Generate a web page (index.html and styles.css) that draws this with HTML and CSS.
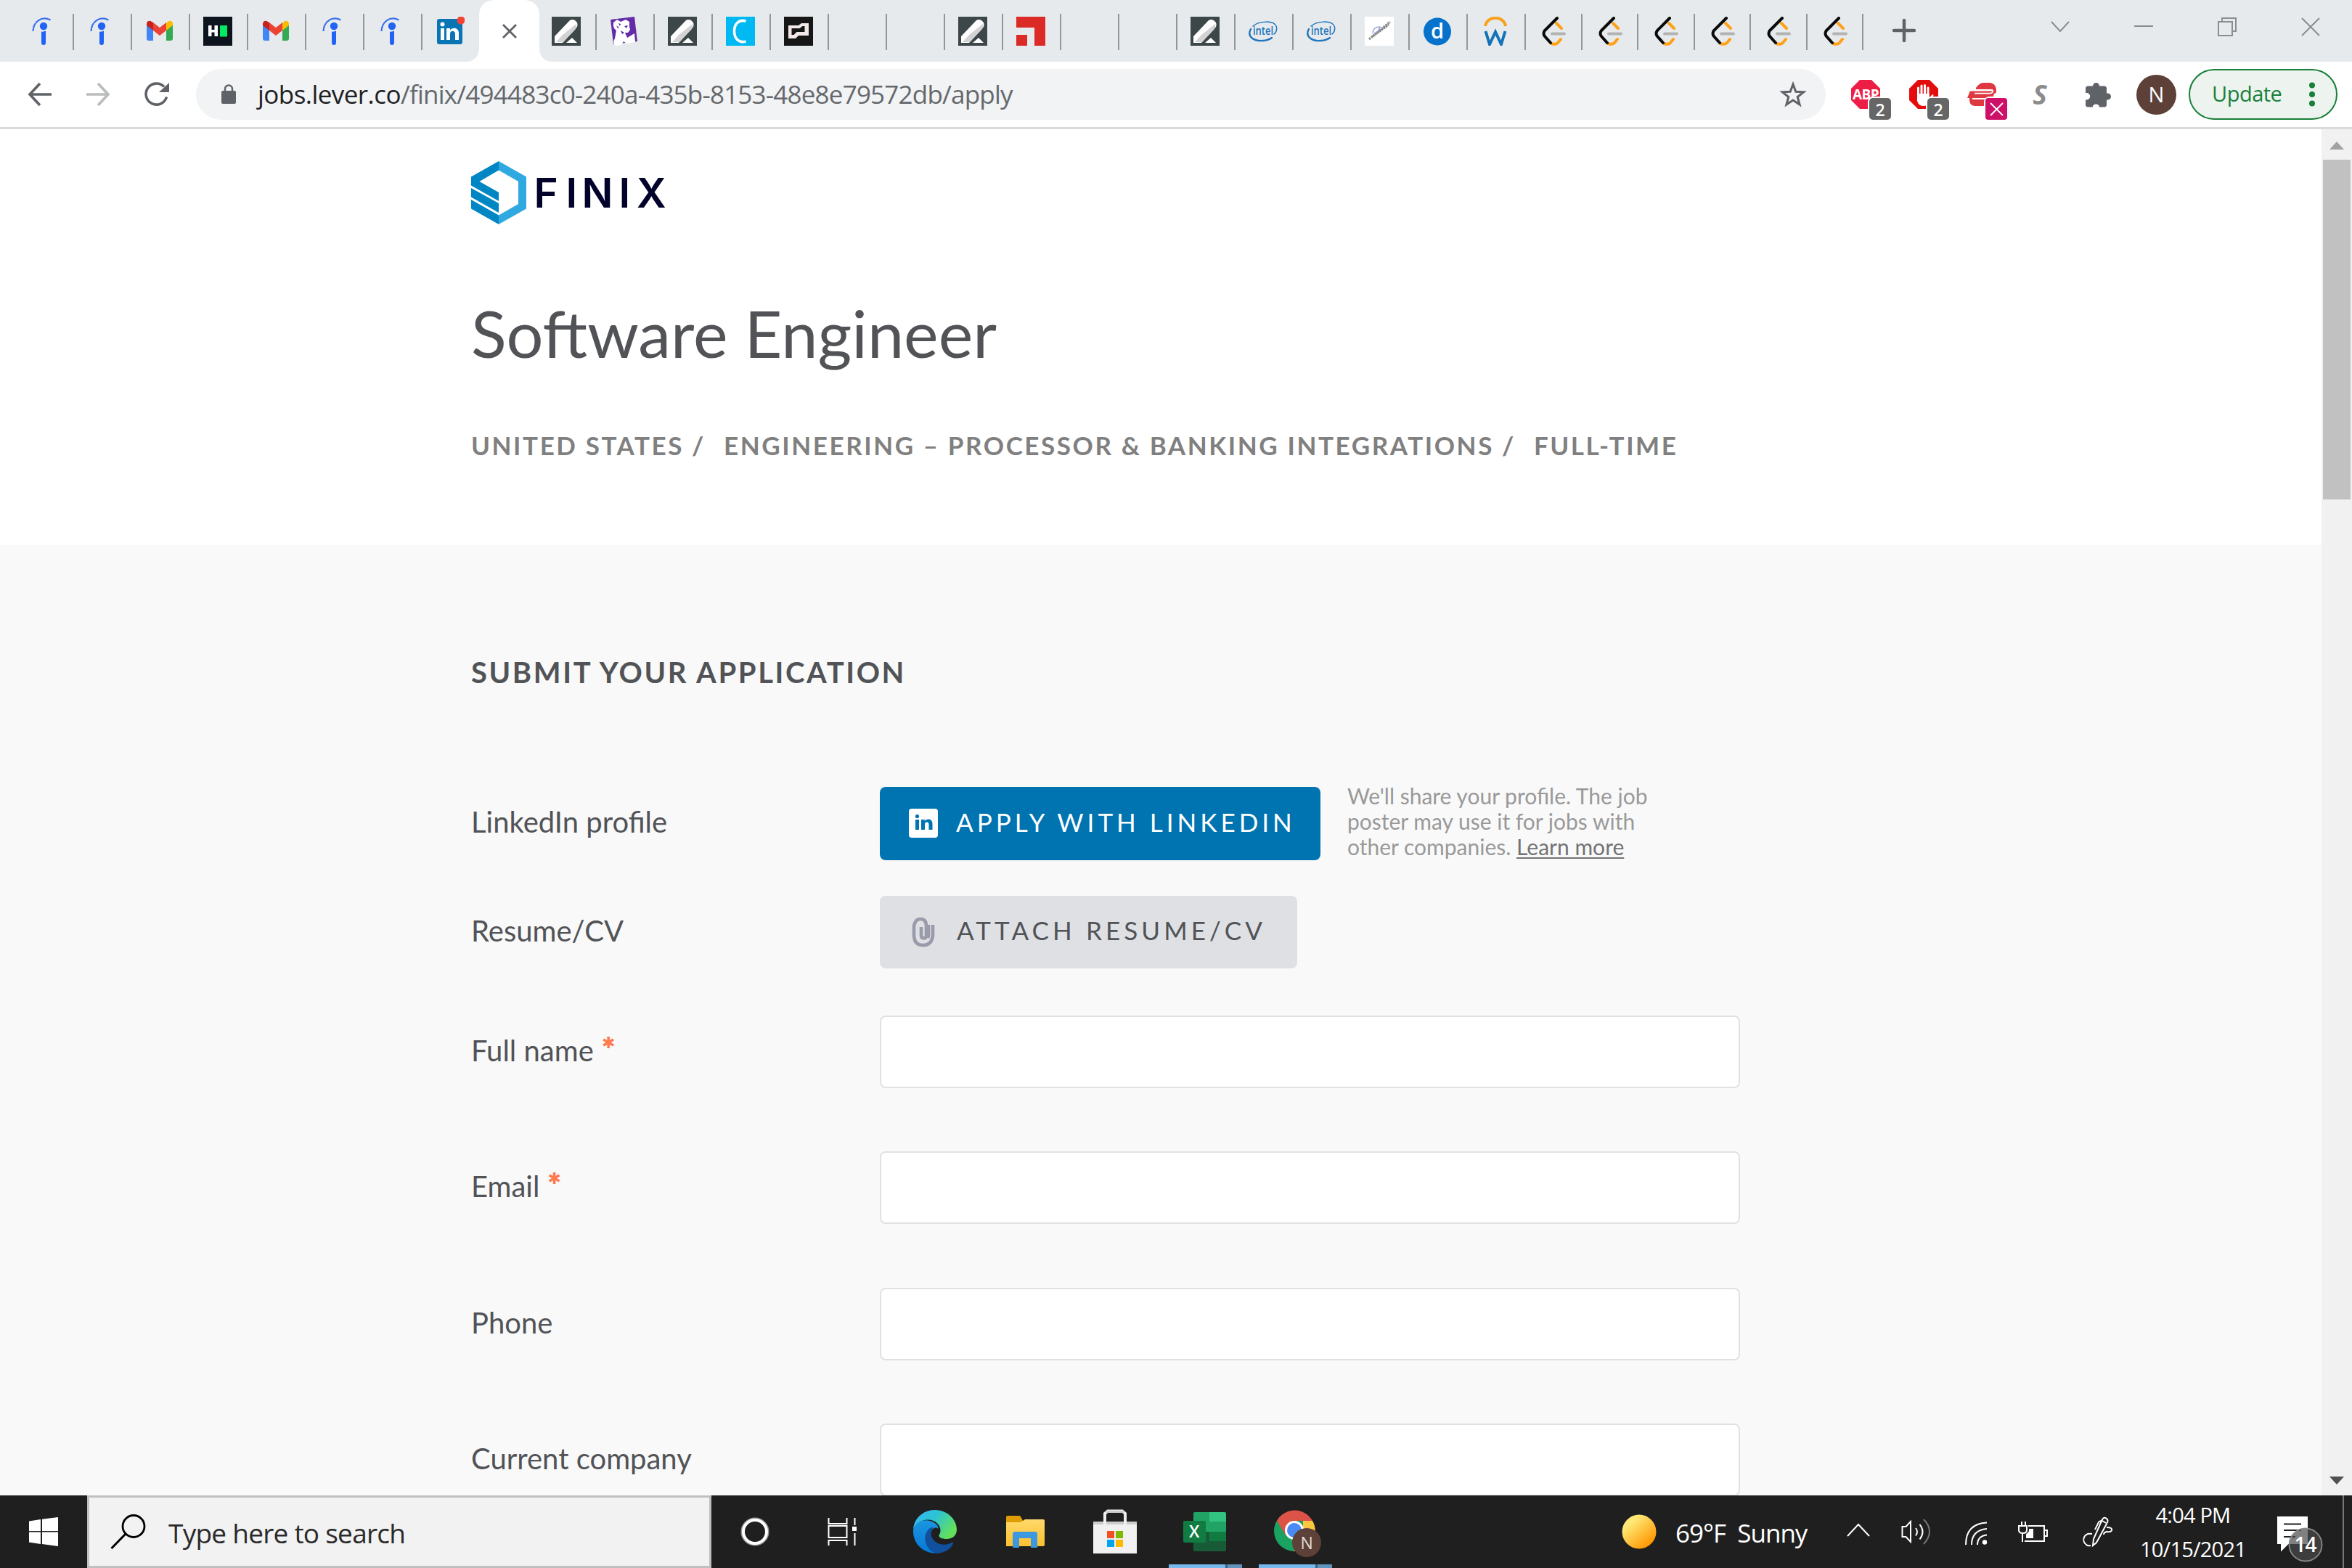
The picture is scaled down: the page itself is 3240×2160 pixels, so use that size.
FILE: index.html
```html
<!DOCTYPE html>
<html lang="en">
<head>
<meta charset="utf-8">
<title>Finix - Software Engineer</title>
<link rel="stylesheet" href="styles.css">
</head>
<body>
<svg width="0" height="0" class="defs">
  <defs>
    <linearGradient id="sun" x1="0.1" y1="0.1" x2="0.8" y2="0.9"><stop offset=".2" stop-color="#ffe873"/><stop offset="1" stop-color="#ff9500"/></linearGradient>
    <linearGradient id="edge-top" x1="0" y1="0" x2="1" y2=".5"><stop offset="0" stop-color="#35b5f5"/><stop offset=".5" stop-color="#2cc3d5"/><stop offset="1" stop-color="#62e05c"/></linearGradient>
    <linearGradient id="edge-mid" x1="0" y1="0" x2="0" y2="1"><stop offset="0" stop-color="#1b96de"/><stop offset="1" stop-color="#0578d8"/></linearGradient>
    <linearGradient id="folder" x1="0" y1="0" x2="0" y2="1"><stop offset="0" stop-color="#ffd96b"/><stop offset="1" stop-color="#fcbf2e"/></linearGradient>
    <symbol id="indeed" viewBox="0 0 40 40"><path d="M5.500 20C6 7 17 -1.500 29.500 4.500" fill="none" stroke="#3b70f0" stroke-width="2.200"/><circle cx="20" cy="13" r="5.200" fill="#2164f3"/><path d="M17 20.500q3 .5 6-1V36a3 3 0 0 1-6 0z" fill="#2164f3"/></symbol>
    <symbol id="gmail" viewBox="0 0 40 40"><path d="M2 11v19q0 3 3 3h6V17z" fill="#4285f4"/><path d="M29 17v16h6q3 0 3-3V11z" fill="#34a853"/><path d="M29 9v10l9-7v-2c0-4-4-5.500-7-3z" fill="#fbbc04"/><path d="M11 19V8l9 7 9-7v11l-9 7z" fill="#ea4335"/><path d="M2 10v2l9 7V8L9 7C6 4.500 2 6 2 10z" fill="#c5221f"/></symbol>
    <symbol id="hackerrank" viewBox="0 0 40 40"><path d="M0 0h40v40H0z" fill="#0e141e"/><path d="M7 12h4.500v6h4v-6H20v15h-4.500v-5.500h-4V27H7z" fill="#fff"/><path d="M23 12h10v15.500H23z" fill="#00ea64"/></symbol>
    <symbol id="linkedin" viewBox="0 0 40 40"><rect x="2" y="3" width="35" height="35" rx="3" fill="#0a75b5"/><g fill="#fff"><path d="M7 16h5v16H7zM15 16h5v2.500c3-4.500 12-4 12 4V32h-5v-8.500c0-5-7-5-7 0V32h-5z"/><circle cx="9.500" cy="10.500" r="3"/></g><circle cx="35" cy="5" r="5.500" fill="#f44336"/></symbol>
    <symbol id="slab" viewBox="0 0 40 40"><path d="M0 0h40v40H0z" fill="#3d474a"/><path d="M4 27L25 5q3-2 7 0l3 3q1 2 0 6L15 36H4z" fill="#fff"/><path d="M15 25L34 10q1 3-1 7L16 35H6z" fill="#d3d3d3"/><path d="M28 29l7 7H20z" fill="#fff"/></symbol>
    <symbol id="dog" viewBox="0 0 40 40"><path d="M1 4L34 0l4 34L5 38z" fill="#632ca6"/><path d="M5 8l5-4 5 3 7-3 5 3 0 7 1 4-3 4-4 0 3 7 10-6 1 12-12 2-4-3-3 5-8 1q-5-4-1-10l2-11q-5-3-4-11z" fill="#fff"/><path d="M12 9l3 1-1 3zM20 13l5-1-2 4zM15 19l5 3-3 2zM9 12l2 4 2-1z" fill="#632ca6"/></symbol>
    <symbol id="cfav" viewBox="0 0 40 40"><path d="M0 0h40v40H0z" fill="#00b9f2"/><path d="M27.500 6C17 3 11.500 11 11.500 20S17 37 27.500 34" fill="none" stroke="#fff" stroke-width="3.600"/></symbol>
    <symbol id="karat" viewBox="0 0 40 40"><path d="M0 0h40v40H0z" fill="#161616"/><path fill-rule="evenodd" d="M6 12h14l4-3h10v17H20l-4 4H6zM10.500 16v9h3l4-4h11v-8h-3l-4 3z" fill="#f3e8e8"/></symbol>
    <symbol id="redcorner" viewBox="0 0 40 40"><path d="M0 0h40v40H25V15H0zM0 25h15v15H0z" fill="#dc2b27"/></symbol>
    <symbol id="intel" viewBox="0 0 40 40"><g fill="none" stroke="#2075bb" stroke-linecap="round"><path d="M6 13C14 6 35 4 38.500 14q1 6-3.500 10" stroke-width="1.500"/><path d="M3 17C-3 28 8 34 20 33q7-.5 12-4" stroke-width="2.300"/></g><text x="6" y="24.500" font-size="17" textLength="28" lengthAdjust="spacingAndGlyphs" class="glyph-text intel-text">intel</text></symbol>
    <symbol id="quill" viewBox="0 0 40 40"><path d="M0 0h40v40H0z" fill="#fff"/><path d="M6 31L35 7M11 27L33 11" stroke="#888" stroke-width="3.200" stroke-dasharray="2.500 1.200"/><path d="M11 23q0-9 10-9-2 7-8 9" fill="none" stroke="#9ba8dc" stroke-width="1.500"/></symbol>
    <symbol id="dfav" viewBox="0 0 40 40"><circle cx="20" cy="20.500" r="19" fill="#0672cb"/><text x="11" y="30" font-size="29" class="glyph-text d-text">d</text></symbol>
    <symbol id="wfav" viewBox="0 0 40 40"><path d="M6 13C8-2 32-2 34 13" fill="none" stroke="#f9a11b" stroke-width="4"/><path d="M6.500 20l5.500 18 8-17 8 17 5.500-18" fill="none" stroke="#1473b8" stroke-width="4"/></symbol>
    <symbol id="leet" viewBox="0 0 40 40"><g fill="none" stroke-width="4" stroke-linecap="round"><path d="M24 9l7 7M17 37q6 2 9-1l4-5" stroke="#ffa116"/><path d="M18 23.500h17" stroke="#b3b3b3"/><path d="M25 2L8 19q-3 4 0 8l8 9" stroke="#0a0a0a"/></g></symbol>
    <symbol id="lock" viewBox="0 0 22 28"><path d="M3 9h16q2 0 2 2v14q0 2-2 2H3q-2 0-2-2V11q0-2 2-2z" fill="#5f6368"/><path d="M6 10V6.500a5 5 0 0 1 10 0V10" fill="none" stroke="#5f6368" stroke-width="2.500"/></symbol>
    <symbol id="octagon" viewBox="0 0 40 40"><path d="M12 0h16l12 12v16L28 40H12L0 28V12z"/></symbol>
  </defs>
</svg>

<header class="tabstrip">
  <div class="tab"><svg><use href="#indeed"/></svg></div>
  <div class="tab"><svg><use href="#indeed"/></svg></div>
  <div class="tab"><svg><use href="#gmail"/></svg></div>
  <div class="tab"><svg><use href="#hackerrank"/></svg></div>
  <div class="tab"><svg><use href="#gmail"/></svg></div>
  <div class="tab"><svg><use href="#indeed"/></svg></div>
  <div class="tab"><svg><use href="#indeed"/></svg></div>
  <div class="tab last"><svg><use href="#linkedin"/></svg></div>
  <div class="tab-active">
    <svg class="tab-shape" viewBox="0 0 114 85"><path d="M0 85Q16 83 16 65V20Q17 2 36 0H79Q98 2 99 20V65Q99 83 115 85z" fill="#fff"/></svg>
    <svg class="tab-close" viewBox="0 0 20 20"><path d="M1 1l18 18M19 1L1 19" stroke="#5f6368" stroke-width="2.800"/></svg>
  </div>
  <div class="tab"><svg><use href="#slab"/></svg></div>
  <div class="tab"><svg><use href="#dog"/></svg></div>
  <div class="tab"><svg><use href="#slab"/></svg></div>
  <div class="tab"><svg><use href="#cfav"/></svg></div>
  <div class="tab"><svg><use href="#karat"/></svg></div>
  <div class="tab"></div>
  <div class="tab"></div>
  <div class="tab"><svg><use href="#slab"/></svg></div>
  <div class="tab"><svg><use href="#redcorner"/></svg></div>
  <div class="tab"></div>
  <div class="tab"></div>
  <div class="tab"><svg><use href="#slab"/></svg></div>
  <div class="tab"><svg><use href="#intel"/></svg></div>
  <div class="tab"><svg><use href="#intel"/></svg></div>
  <div class="tab"><svg><use href="#quill"/></svg></div>
  <div class="tab"><svg><use href="#dfav"/></svg></div>
  <div class="tab"><svg><use href="#wfav"/></svg></div>
  <div class="tab narrow"><svg><use href="#leet"/></svg></div>
  <div class="tab narrow"><svg><use href="#leet"/></svg></div>
  <div class="tab narrow"><svg><use href="#leet"/></svg></div>
  <div class="tab narrow"><svg><use href="#leet"/></svg></div>
  <div class="tab narrow"><svg><use href="#leet"/></svg></div>
  <div class="tab narrow"><svg><use href="#leet"/></svg></div>
  <svg class="new-tab" viewBox="0 0 30 30"><path d="M15 1v28M1 15h28" stroke="#5f6368" stroke-width="4.500" stroke-linecap="round"/></svg>
  <div class="window-controls">
    <svg viewBox="0 0 26 26"><path d="M1 6l12 13L25 6"/></svg>
    <svg viewBox="0 0 26 26"><path d="M0 12h26"/></svg>
    <svg viewBox="0 0 26 26"><path d="M1 6h19v19H1zM6 6V1h19v18h-5"/></svg>
    <svg viewBox="0 0 26 26"><path d="M1 1l24 24M25 1L1 25"/></svg>
  </div>
</header>

<nav class="toolbar">
  <svg class="nav-icon back" viewBox="0 0 32 32"><path d="M32 16H2M16 1L2 16l14 15"/></svg>
  <svg class="nav-icon forward" viewBox="0 0 32 32"><path d="M0 16h30M16 1l14 15-14 15"/></svg>
  <svg class="nav-icon reload" viewBox="0 0 34 34"><path d="M30.500 20.500a14.500 14.500 0 1 1-3.500-14"/><path d="M34 1v13H20z" class="solid"/></svg>
  <div class="omnibox">
    <svg class="lock"><use href="#lock"/></svg>
    <span class="url"><b>jobs.lever.co</b>/finix/494483c0-240a-435b-8153-48e8e79572db/apply</span>
    <svg class="star" viewBox="0 0 36 36"><path d="M18 4l3.800 10.200 10.900.5-8.500 6.800 2.900 10.500L18 26l-9.100 6 2.900-10.500-8.500-6.800 10.900-.5z" fill="none" stroke="#5f6368" stroke-width="3"/></svg>
  </div>
  <div class="extensions">
    <div class="ext"><svg class="abp"><use href="#octagon"/></svg><span class="abp-label">ABP</span><span class="badge">2</span></div>
    <div class="ext"><svg class="adblock"><use href="#octagon"/></svg>
      <svg class="hand" viewBox="0 0 40 40"><path d="M12.500 24V11M17 22V8M21.500 22V7.500M26 24V11" stroke="#fff" stroke-width="3" stroke-linecap="round"/><path d="M11 19h16.500v6l4-4.500q2-1 2 1L27 33q-2 3-8 3t-8-7z" fill="#fff"/></svg><span class="badge">2</span></div>
    <div class="ext"><svg viewBox="0 0 40 40"><path d="M12 11Q17 4 22 4h10q9 2 8 13-1 2-3 2L35 26q-4 10-10 10H10q-8-1-7-11H0l4-10h31v-2H12z" fill="#de3840"/><path d="M3 14.700h31q2 0 1 2t-4 2H10M7 26h24" fill="none" stroke="#fff" stroke-width="1.800"/></svg>
      <svg class="x-badge" viewBox="0 0 30 30"><rect width="30" height="30" rx="4" fill="#ce1069"/><path d="M7 7l17 17M24 7L7 24" stroke="#fff" stroke-width="1.800"/></svg></div>
    <div class="ext s-ext">S</div>
    <svg class="puzzle" viewBox="0 0 36 36"><path d="M10 6.500a4.500 4.500 0 0 1 9 0h6.500q3.500 0 3.500 3.500v6.500h1.500a4.500 4.500 0 0 1 0 9H29V32q0 3.500-3.500 3.500H19a4.700 4.700 0 0 0-9.300 0H3.500Q0 35.500 0 32v-6.500h1.500a4.700 4.700 0 0 0 0-9.500H0v-6q0-3.500 3.500-3.500z" fill="#5f6368"/></svg>
  </div>
  <div class="avatar">N</div>
  <div class="update"><span>Update</span><i></i></div>
</nav>

<main class="viewport">
  <div class="page">
    <section class="posting-head">
      <svg class="logo" viewBox="0 0 266 87">
        <path d="M38 0l38 21.500v44L38 87V74.500l27-15.500V28L38 12.500z" fill="#30a9e1"/>
        <path d="M38 0v12.500L11.500 28 38 43v12L0 33.500v-12z" fill="#0087c3"/>
        <path d="M0 37l38 21v13L0 49.500z" fill="#0087c3"/>
        <path d="M0 53l38 21.500V87L0 65.500z" fill="#0087c3"/>
        <text x="86.500 130.500 152.500 203.500 228" y="63.700" class="logo-text">FINIX</text>
      </svg>
      <h1>Software Engineer</h1>
      <p class="categories"><span>United States /</span><span>Engineering – Processor &amp; Banking Integrations /</span><span>Full-time</span></p>
    </section>
    <section class="application">
      <h2>Submit your application</h2>
      <div class="field linkedin-row">
        <label>LinkedIn profile</label>
        <div class="linkedin-cell">
          <button class="btn btn-linkedin">
            <svg viewBox="0 0 40 40"><rect width="40" height="40" rx="4" fill="#fff"/><g fill="#0073b1"><path d="M9 15h5v14H9zM17 15h4.800v2c3-4 10.700-3.500 10.700 4v8h-5v-7.500c0-4-5.500-4-5.500 0V29h-5z"/><circle cx="11.500" cy="10.500" r="2.600"/></g></svg>
            <span>Apply with LinkedIn</span>
          </button>
          <p class="hint">We'll share your profile. The job<br>poster may use it for jobs with<br>other companies. <a>Learn more</a></p>
        </div>
      </div>
      <div class="field resume-row">
        <label>Resume/CV</label>
        <button class="btn btn-attach">
          <svg viewBox="0 0 40 40"><path d="M27 10v15a8.500 8.500 0 0 1-1 3M17 13v11.500q0 4 3.500 4t3.500-4V11.500q0-9-7.500-9.500T7 11.500v12Q7 38 19.500 38T33 24V10" fill="none" stroke="#9a9baa" stroke-width="4.600"/></svg>
          <span>Attach Resume/CV</span>
        </button>
      </div>
      <div class="field text-row"><label>Full name <sup>✱</sup></label><div class="input"></div></div>
      <div class="field text-row"><label>Email <sup>✱</sup></label><div class="input"></div></div>
      <div class="field text-row"><label>Phone</label><div class="input"></div></div>
      <div class="field text-row"><label>Current company</label><div class="input"></div></div>
    </section>
  </div>
  <aside class="scrollbar">
    <svg viewBox="0 0 20 11"><path d="M0 11L10 0l10 11z" fill="#a3a3a3"/></svg>
    <div class="thumb"></div>
    <svg class="down" viewBox="0 0 20 11"><path d="M0 0h20L10 11z" fill="#505050"/></svg>
  </aside>
</main>

<footer class="taskbar">
  <div class="start"><svg viewBox="0 0 40 40"><path d="M0 5.500L16 3v16H0zM18 2.700L40 0v19H18zM0 20.500h16V37L0 34.500zM18 20.500h22V40l-22-3z" fill="#fff"/></svg></div>
  <div class="search">
    <svg viewBox="0 0 50 50"><circle cx="32" cy="17.500" r="15" fill="none" stroke="#000" stroke-width="2.800"/><path d="M21 28L1.500 48" stroke="#000" stroke-width="3"/></svg>
    <span>Type here to search</span>
  </div>
  <div class="apps">
    <div class="app system"><svg class="s40" viewBox="0 0 40 40"><circle cx="20" cy="20" r="18" fill="none" stroke="#999" stroke-width="3"/><circle cx="20" cy="20" r="16" fill="none" stroke="#fff" stroke-width="4"/></svg></div>
    <div class="app system"><svg class="s40" viewBox="0 0 40 40"><g fill="none" stroke="#fff" stroke-width="2"><path d="M1.500 1v8h25V1M1.500 12h25v16h-25zM1.500 39v-7h25v7M37.500 1v10M37.500 22v17"/></g><path d="M34 13h6v6h-6z" fill="#fff"/></svg></div>
    <div class="app first-pinned"><svg class="s60" viewBox="0 0 60 60"><path d="M0 27C1 11 14 0 30 0c18 0 30 14 30 27 0 9-7 13-14 13-8 0-12-3-10-6 4-7 0-17-11-20C14 12 4 17 0 27z" fill="url(#edge-top)"/><path d="M0 28C2 18 13 12 23 15c8 2 13 8 11 11-2-3-8-1-10 5-3 11 3 25 17 27-22 7-42-9-41-30z" fill="url(#edge-mid)"/><path d="M23 25c-11 9-8 27 6 34 11 2 23-4 26-13 1-2-1-2-2-1-9 5-21 3-26-5-4-6-2-11 1-16-2 0-4 0-5 1z" fill="#11509c"/></svg></div>
    <div class="app"><svg class="s60" viewBox="0 0 60 60"><path d="M4 10q0-2 2-2h17q3 4 5 9l-4 5H4z" fill="#e09c04"/><path d="M4 17h20l6-4h25q2 0 2 2v33q0 2-2 2H4z" fill="url(#folder)"/><path d="M13 52V33q0-3 3-3h28q3 0 3 3v19h-9V39H22v13z" fill="#3d98e0"/></svg></div>
    <div class="app"><svg class="s60" viewBox="0 0 60 60"><path d="M0 16h60v5H0z" fill="#ccc"/><path d="M0 20h60v40H0z" fill="#f1f1f1"/><path d="M16 20V5l4-3.500h20L44 5v15" fill="none" stroke="#eee" stroke-width="4"/><path d="M18 1h24v3H18z" fill="#ccc"/><path d="M19 29h10v10H19z" fill="#f25022"/><path d="M31 29h10v10H31z" fill="#7fba00"/><path d="M19 41h10v10H19z" fill="#00a4ef"/><path d="M31 41h10v10H31z" fill="#ffb900"/></svg></div>
    <div class="app running"><svg class="s60" viewBox="0 0 60 60"><path d="M14 5q0-2 2-2h21v14H14z" fill="#21a366"/><path d="M36 3h21q2 0 2 2v12H36z" fill="#33c481"/><path d="M14 16h23v14H14z" fill="#21a366"/><path d="M36 16h23v14H36z" fill="#21a366"/><path d="M14 30h22v14H14z" fill="#185c37"/><path d="M36 30h23v14H36z" fill="#107c41"/><path d="M14 43h45v12q0 2-2 2H16q-2 0-2-2z" fill="#185c37"/><rect x="0" y="15" width="31" height="30" rx="2" fill="#107c41"/><text x="8" y="38" font-size="23" class="glyph-text excel-text">X</text></svg></div>
    <div class="app running"><svg class="s66" viewBox="0 0 66 66"><circle cx="29" cy="32" r="28" fill="#1aa260"/><path d="M5 18A28 28 0 0 1 54 18H29L17 38z" fill="#dd5347"/><path d="M54 18A28 28 0 0 1 28 60L41 38V18z" fill="#ffc740"/><circle cx="29" cy="31" r="13" fill="#fff"/><circle cx="29" cy="31" r="10" fill="#4a8af4"/><circle cx="46" cy="48" r="20" fill="#5d4037"/><text x="37.500" y="56.500" font-size="23" class="glyph-text n-text">N</text></svg></div>
  </div>
  <div class="tray">
    <svg class="sun" viewBox="0 0 48 48"><circle cx="24" cy="24" r="23.500" fill="url(#sun)"/></svg>
    <span class="weather">69°F&nbsp; Sunny</span>
    <svg class="t-chev" viewBox="0 0 32 18"><path d="M1 17L16 1l15 16"/></svg>
    <svg class="t-vol" viewBox="0 0 42 38"><path d="M1.500 12h5L13 5v28l-6.500-7h-5zM20 14q4 5 0 10.500M25.500 9q8 10 0 20.500"/><path d="M31 2q16 16.500 0 34" stroke="#777"/></svg>
    <svg class="t-wifi" viewBox="0 0 32 32"><path d="M1 32Q1 3 30 1.500M9 32q0-20 21-22M17 32q0-12 13-13.500"/><circle cx="27" cy="28.500" r="3.200" class="solid"/></svg>
    <svg class="t-bat" viewBox="0 0 42 30"><path d="M15 7h22v21H10M37 13h4v8h-4M6 1v6M11 1v6M2 7h11v6q0 4-5.500 4T2 13zM7 17v12"/><path d="M16 11h6v13H12v-6q4-2 4-5z" class="solid"/></svg>
    <svg class="t-pen" viewBox="0 0 42 42"><path d="M14 40l1-9L27 4q3-4 6-1t0 7L19 36zM27 6l5 3M27 6q-5 0-6 4l-4 8M13 24C1 22-2 34 5 39q2 2 6 1M33 15q8 0 7 4-1 3-7 2-4 1-4 4"/></svg>
    <div class="clock"><span>4:04 PM</span><span>10/15/2021</span></div>
    <svg class="t-note" viewBox="0 0 63 60"><path d="M1 0h40v36H15l-9 9v-9H1z" fill="#fff"/><path d="M9 9.500h24M9 18h24M9 27h16" stroke="#1f1f1f" stroke-width="2"/><circle cx="39" cy="38" r="22.500" fill="#4a4a4a" fill-opacity=".7" stroke="#8a8a8a" stroke-width="1.800"/><text x="23.500" y="47.500" font-size="28" class="glyph-text note-text">14</text></svg>
    <i class="peek"></i>
  </div>
</footer>
</body>
</html>
```
FILE: styles.css
```css
* { box-sizing: border-box; }
body {
  margin: 0; width: 3240px; height: 2160px; overflow: hidden;
  display: flex; flex-direction: column;
  font-family: "Open Sans", "Noto Sans", sans-serif; background: #fff;
}
svg { display: block; flex: none; overflow: visible; }
.defs { position: absolute; }
.glyph-text { font-family: "Open Sans", sans-serif; fill: #fff; }
.intel-text { fill: #2075bb; font-weight: 600; }
.d-text, .excel-text, .note-text { font-weight: 600; }
.note-text { letter-spacing: -1px; }
.n-text { fill: #ddd; }

/* Tab strip */
.tabstrip { height: 85px; background: #e7eaed; display: flex; padding-left: 22px; flex: none; }
.tab {
  width: 80px; height: 50px; margin-top: 19px; padding: 4px 0 0 18px;
  border-right: 2px solid #94979a; flex: none;
}
.tab svg { width: 40px; height: 40px; }
.tab.narrow { width: 77.5px; }
.tab.last { border-color: transparent; }
.tab-active { width: 80px; flex: none; position: relative; }
.tab-shape { position: absolute; left: -18px; top: 0; width: 114px; height: 85px; }
.tab-close { position: absolute; left: 30px; top: 33px; width: 20px; height: 20px; }
.new-tab { width: 30px; height: 30px; margin: 27px 0 0 41px; }
.window-controls { display: flex; gap: 89px; margin: 24px 44px 0 auto; }
.window-controls svg { width: 26px; height: 26px; fill: none; stroke: #8b8d8f; stroke-width: 2; }

/* Toolbar */
.toolbar { height: 93px; border-bottom: 3px solid #dadada; display: flex; align-items: center; padding-left: 39px; flex: none; }
.nav-icon { width: 32px; height: 32px; fill: none; stroke: #5f6368; stroke-width: 3.6; }
.nav-icon .solid { fill: #5f6368; stroke: none; }
.forward { stroke: #babcbe; margin-left: 48px; }
.reload { width: 34px; height: 34px; margin-left: 48px; }
.omnibox { margin-left: 37px; width: 2245px; height: 70px; border-radius: 35px; background: #f1f3f4; display: flex; align-items: center; padding: 0 27px 0 34px; }
.lock { width: 22px; height: 28px; }
.url { margin-left: 29px; font-size: 35px; line-height: 48px; letter-spacing: -0.79px; color: #65686c; white-space: nowrap; }
.url b { font-weight: 400; color: #202124; letter-spacing: -0.55px; }
.star { width: 36px; height: 36px; margin-left: auto; }
.extensions { display: flex; align-items: center; margin-left: 35px; }
.ext { position: relative; width: 40px; height: 40px; margin-right: 40px; }
.ext > svg { width: 40px; height: 40px; }
.abp { fill: #ed1e45; }
.adblock { fill: #e40d0d; }
.abp-label { position: absolute; left: 2px; top: 7px; font-size: 19px; line-height: 26px; font-weight: 700; color: #fff; letter-spacing: -0.5px; }
.ext .hand { position: absolute; left: 0; top: 0; }
.badge {
  position: absolute; left: 25px; top: 25px; width: 30px; height: 30px; border-radius: 5px;
  background: #666; color: #fff; font-size: 23px; line-height: 32px; font-weight: 600; text-align: center;
  box-shadow: 0 0 0 2px #fff;
}
.ext > .x-badge { position: absolute; left: 25px; top: 25px; width: 30px; height: 30px; border-radius: 5px; box-shadow: 0 0 0 2px #fff; }
.s-ext { font-size: 37px; line-height: 40px; font-weight: 700; font-style: italic; color: #8c8c8c; text-align: center; }
.puzzle { width: 36px; height: 36px; margin-left: 3px; }
.avatar { width: 55px; height: 55px; border-radius: 50%; background: #5d4037; color: #fff; font-size: 29px; line-height: 54px; text-align: center; margin-left: 34px; }
.update {
  width: 205px; height: 70px; margin-left: 17px; border: 2px solid #188038; border-radius: 35px; background: #edf3ef;
  color: #188038; font-size: 29px; letter-spacing: -0.5px; display: flex; align-items: center; padding: 0 29px 0 30px; justify-content: space-between;
}
.update span { padding-bottom: 3px; }
.update i { width: 8px; height: 8px; border-radius: 50%; background: #188038; box-shadow: 0 -12.5px #188038, 0 12.5px #188038; }

/* Page */
.viewport { height: 1882px; display: flex; flex: none; }
.page { width: 3198px; height: 1882px; overflow: hidden; font-family: Lato, sans-serif; color: #515357; background: #f9f9f9; }
.posting-head { height: 573px; background: #fff; padding: 44px 0 0 649px; }
.logo { width: 266px; height: 87px; }
.logo-text { font-family: Inter, sans-serif; font-weight: 600; font-size: 56.5px; fill: #02022b; }
h1 { margin: 95px 0 0; font-size: 90px; line-height: 108px; font-weight: 400; }
.categories { margin: 80px 0 0; font-size: 35px; line-height: 42px; font-weight: 700; letter-spacing: 2.58px; color: #808080; text-transform: uppercase; display: flex; gap: 25px; }
.application { padding: 151px 0 0 649px; }
h2 { margin: 0 0 133.5px; font-size: 40px; line-height: 48px; font-weight: 700; letter-spacing: 2.6px; text-transform: uppercase; }
.field { display: grid; grid-template-columns: 563px 1185px; grid-template-rows: 100%; align-items: center; }
label { font-size: 40px; line-height: 48px; padding-bottom: 4px; white-space: nowrap; }
sup { font-family: "DejaVu Sans", sans-serif; font-size: 22px; line-height: 0; color: #ff7a4f; vertical-align: 18px; margin-left: 1px; }
.linkedin-row { height: 101px; margin-bottom: 49px; }
.linkedin-cell { display: flex; align-items: center; gap: 37px; white-space: nowrap; height: 101px; }
.resume-row { height: 100px; margin-bottom: 65px; }
.text-row { height: 100px; margin-bottom: 87.5px; }
.btn { border: 0; border-radius: 8px; display: flex; align-items: center; font-family: Lato, sans-serif; font-size: 35px; letter-spacing: 5px; text-transform: uppercase; padding: 0 0 0 40px; white-space: nowrap; }
.btn svg { width: 40px; height: 40px; }
.btn span { margin-left: 25px; line-height: 42px; padding-bottom: 5px; }
.btn-linkedin { width: 607px; height: 101px; background: #0073b1; color: #fff; }
.btn-attach { width: 575px; height: 100px; background: #dfe0e4; color: #515357; letter-spacing: 5.1px; }
.btn-attach span { margin-left: 26px; padding-bottom: 6px; }
.hint { margin: 0; font-size: 30px; line-height: 35px; color: #999; padding-bottom: 6px; }
.hint a { color: #737373; text-decoration: underline; text-decoration-thickness: 2px; text-underline-offset: 3px; }
.input { height: 100px; background: #fff; border: 2px solid #e1e1e1; border-radius: 8px; }

.scrollbar { width: 42px; background: #f1f1f1; display: flex; flex-direction: column; align-items: center; padding: 17px 0 15px; }
.scrollbar svg { width: 20px; height: 11px; }
.thumb { width: 38px; height: 468px; margin-top: 14px; background: #c1c1c1; }
.scrollbar .down { margin-top: auto; }

/* Taskbar */
.taskbar { height: 100px; background: #1f1f1f; display: flex; flex: none; }
.start { width: 120px; padding: 30px 0 0 40px; }
.start svg { width: 40px; height: 40px; }
.search { width: 860px; border: 3px solid #c0c0c0; background: #f2f2f2; display: flex; align-items: center; padding-left: 29px; color: #2b2b2b; font-size: 37px; letter-spacing: -0.75px; }
.search svg { width: 50px; height: 50px; }
.search span { margin: 2px 0 0 30px; }
.apps { display: flex; }
.app { width: 124px; display: flex; align-items: center; justify-content: center; position: relative; }
.app.system { width: 120px; }
.first-pinned { margin-left: 6px; }
.s40 { width: 40px; height: 40px; }
.s60 { width: 60px; height: 60px; }
.s66 { width: 66px; height: 66px; margin-left: 5px; }
.running::after { content: ""; position: absolute; left: 12px; bottom: 0; width: 101px; height: 5px; background: linear-gradient(90deg, #76b9ed 78px, #41627e 78px 81px, #6094bf 81px); }
.tray { margin-left: auto; display: flex; align-items: center; color: #fff; }
.tray svg { fill: none; stroke: #fff; stroke-width: 2; }
.tray svg .solid { fill: #fff; stroke: none; }
.tray svg text, .tray .sun { stroke: none; }
.sun { width: 48px; height: 48px; }
.weather { margin: 2px 0 0 26px; width: 186px; font-size: 35px; letter-spacing: -1px; white-space: nowrap; }
.t-chev { width: 32px; height: 18px; margin: -4px 0 0 50px; }
.t-vol { width: 42px; height: 38px; margin-left: 43px; }
.t-wifi { width: 32px; height: 32px; margin: 4px 0 0 46px; }
.t-bat { width: 42px; height: 30px; margin-left: 40px; }
.t-pen { width: 42px; height: 42px; margin-left: 48px; }
.clock { width: 150px; margin: 0 2px 0 35px; display: flex; flex-direction: column; align-items: center; font-size: 29px; line-height: 47px; letter-spacing: -0.8px; }
.t-note { width: 63px; height: 60px; margin: 20px 0 0 39px; }
.peek { width: 2px; height: 100px; background: #777; margin: 0 11px 0 27px; }
```
